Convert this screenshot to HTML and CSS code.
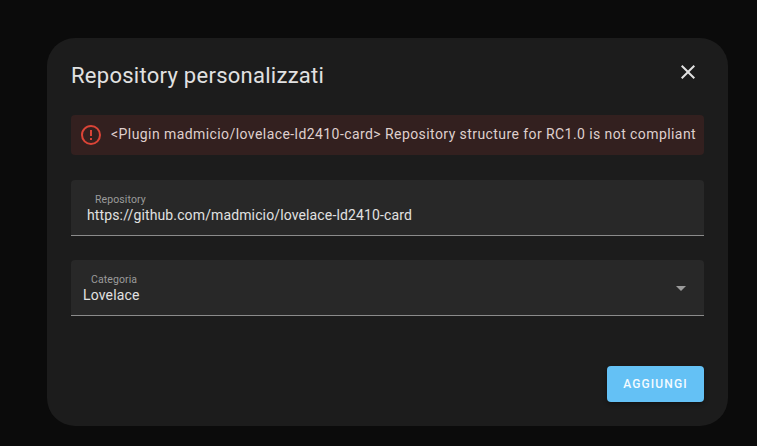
FILE: index.html
```html
<!DOCTYPE html>
<html lang="it">
<head>
<meta charset="utf-8">
<title>Repository personalizzati</title>
<link rel="stylesheet" href="styles.css">
</head>
<body>
<main class="dialog">
  <header class="header">
    <h1 class="title">Repository personalizzati</h1>
    <button class="close" aria-label="Chiudi"><svg viewBox="0 0 24 24"><path d="M19 6.41 17.59 5 12 10.59 6.41 5 5 6.41 10.59 12 5 17.59 6.41 19 12 13.41 17.59 19 19 17.59 13.41 12z"/></svg></button>
  </header>
  <div class="alert">
    <svg class="alert-icon" viewBox="0 0 24 24"><path d="M11 15h2v2h-2v-2m0-8h2v6h-2V7m1-5C6.47 2 2 6.5 2 12a10 10 0 0 0 10 10 10 10 0 0 0 10-10A10 10 0 0 0 12 2m0 18a8 8 0 0 1-8-8 8 8 0 0 1 8-8 8 8 0 0 1 8 8 8 8 0 0 1-8 8z"/></svg>
    <span class="alert-text">&lt;Plugin madmicio/lovelace-ld2410-card&gt; Repository structure for RC1.0 is not compliant</span>
  </div>
  <div class="field field-text">
    <span class="label">Repository</span>
    <span class="value url">https://github.com/madmicio/lovelace-ld2410-card</span>
  </div>
  <div class="field field-select">
    <div class="select-copy">
      <span class="label">Categoria</span>
      <span class="value">Lovelace</span>
    </div>
    <svg class="arrow" viewBox="0 0 10 5"><path d="M0 0h10L5 5z"/></svg>
  </div>
  <footer class="footer"><button class="add">AGGIUNGI</button></footer>
</main>
</body>
</html>
```

FILE: styles.css
```css
* { box-sizing: border-box; }
body {
  margin: 0;
  height: 446px;
  padding: 38px 29px 20px 47px;
  overflow: hidden;
  background: #0b0b0b;
  color: #e1e1e1;
  font-family: Roboto, sans-serif;
}
.dialog {
  display: flex;
  flex-direction: column;
  height: 388px;
  padding: 0 24px 24px;
  border-radius: 28px;
  background: #1c1c1c;
}
.header {
  display: flex;
  justify-content: space-between;
  height: 77px;
}
.title {
  margin: 22px 0 0;
  font-size: 22px;
  line-height: 32px;
  font-weight: 400;
  letter-spacing: .27px;
}
button { border: 0; font-family: inherit; }
.close {
  width: 24px;
  height: 24px;
  margin: 22px 4px 0 0;
  padding: 0;
  background: none;
}
.close svg { display: block; width: 24px; height: 24px; fill: #e1e1e1; }
.alert {
  display: flex;
  align-items: center;
  gap: 8px;
  height: 40px;
  padding: 0 8px;
  border-radius: 4px;
  background: #33201f;
}
.alert-icon { flex: none; width: 24px; height: 24px; fill: #db4437; }
.alert-text {
  margin-bottom: 2px;
  color: #dfcfcd;
  font-size: 14px;
  line-height: 20px;
  letter-spacing: .425px;
  white-space: nowrap;
}
.field {
  height: 56px;
  border-bottom: 1px solid #8b8b8b;
  border-radius: 4px 4px 0 0;
  background: #282828;
}
.field-text { margin-top: 25px; padding: 13px 16px 0; }
.field-select {
  display: flex;
  justify-content: space-between;
  margin-top: 24px;
  padding: 13px 18px 0 12px;
}
.label {
  display: block;
  padding-left: 8px;
  color: #9b9b9b;
  font-size: 10.5px;
  line-height: 13px;
  letter-spacing: .1px;
}
.value {
  display: block;
  font-size: 14px;
  line-height: 18px;
  letter-spacing: .15px;
}
.url { letter-spacing: .13px; }
.arrow { width: 10px; height: 5px; margin-top: 13px; fill: #9b9b9b; }
.footer { display: flex; justify-content: flex-end; margin-top: auto; }
.add {
  width: 97px;
  height: 36px;
  padding: 0;
  border-radius: 4px;
  background: #64c1f5;
  box-shadow: 0 2px 4px rgba(0, 0, 0, .35);
  color: #f4fbff;
  font-size: 12px;
  font-weight: 500;
  letter-spacing: 1.1px;
}
```
